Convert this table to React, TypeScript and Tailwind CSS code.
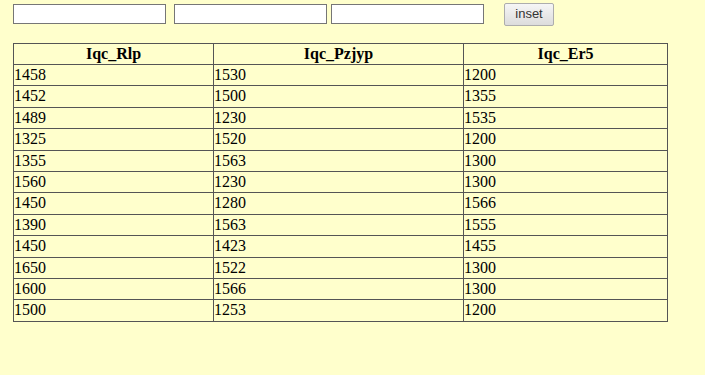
import React from 'react';

const rows: [string, string, string][] = [
  ['1458', '1530', '1200'],
  ['1452', '1500', '1355'],
  ['1489', '1230', '1535'],
  ['1325', '1520', '1200'],
  ['1355', '1563', '1300'],
  ['1560', '1230', '1300'],
  ['1450', '1280', '1566'],
  ['1390', '1563', '1555'],
  ['1450', '1423', '1455'],
  ['1650', '1522', '1300'],
  ['1600', '1566', '1300'],
  ['1500', '1253', '1200'],
];

const App: React.FC = () => {
  return (
    <div className="min-h-[375px] bg-[#ffffcc] pl-[13px] pt-[3px] font-['Liberation_Serif',serif] text-[16px] text-black">
      <div className="flex items-center h-[22px]">
        <input className="w-[153px] h-[20px] border border-[#767676] bg-white" />
        <input className="ml-[8px] w-[153px] h-[20px] border border-[#767676] bg-white" />
        <input className="ml-[4px] w-[153px] h-[20px] border border-[#767676] bg-white" />
        <button className="ml-[20px] w-[50px] h-[23px] rounded-[2px] border border-[#adadad] bg-gradient-to-b from-[#f6f6f6] to-[#dcdcdc] font-['Liberation_Sans',sans-serif] text-[13px] text-[#333]">
          inset
        </button>
      </div>
      <table className="mt-[18px] w-[654px] table-fixed border-collapse">
        <colgroup>
          <col className="w-[200px]" />
          <col className="w-[250px]" />
          <col className="w-[204px]" />
        </colgroup>
        <thead>
          <tr>
            <th className="border border-[#555] p-px text-center font-bold leading-[18px]">Iqc_Rlp</th>
            <th className="border border-[#555] p-px text-center font-bold leading-[18px]">Iqc_Pzjyp</th>
            <th className="border border-[#555] p-px text-center font-bold leading-[18px]">Iqc_Er5</th>
          </tr>
        </thead>
        <tbody>
          {rows.map((r, i) => (
            <tr key={i}>
              {r.map((c, j) => (
                <td key={j} className="border border-[#555] px-0 py-px leading-[18.4px]">{c}</td>
              ))}
            </tr>
          ))}
        </tbody>
      </table>
    </div>
  );
};

export default App;
